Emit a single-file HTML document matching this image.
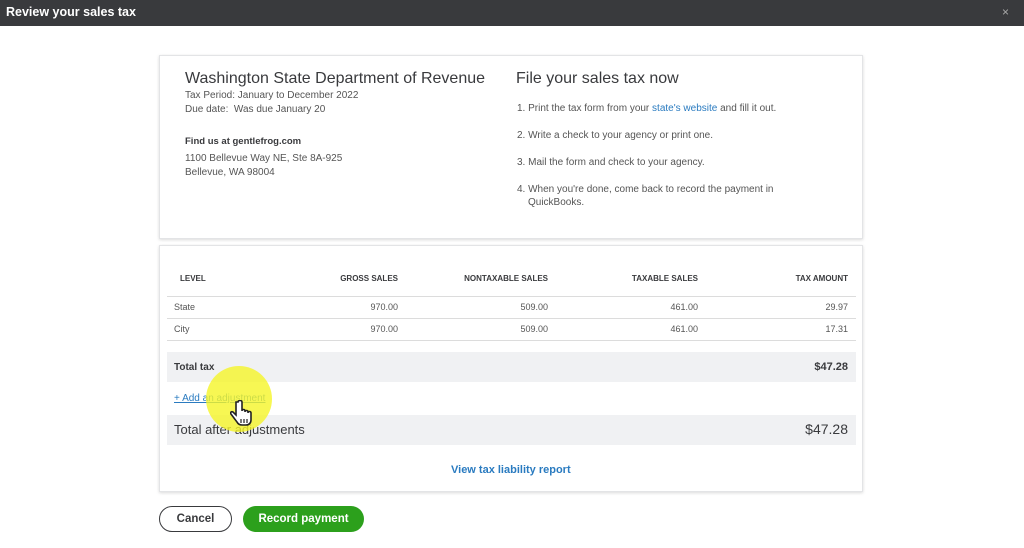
<!DOCTYPE html>
<html><head><style>
*{margin:0;padding:0;box-sizing:border-box}
body{width:1024px;height:548px;background:#fff;font-family:"Liberation Sans",sans-serif;color:#393a3d;position:relative;overflow:hidden}
.a{position:absolute;white-space:nowrap}
.hdr{position:absolute;left:0;top:0;width:1024px;height:26px;background:#393a3d}
.card{position:absolute;left:159px;width:704px;border:1px solid #e3e4e6;box-shadow:0 1px 3px rgba(0,0,0,.15);background:#fff}
.s{font-size:10px;color:#555}
.th{font-size:8px;font-weight:bold;color:#393a3d;top:274px}
.r{text-align:right}
.line{position:absolute;left:167px;width:689px;height:1px;background:#dcdcdc}
.bar{position:absolute;left:167px;width:689px;background:#f0f1f3}
.blue{color:#2a7bc0}
</style></head><body>
<div class="hdr"></div>
<div class="a" style="left:6px;top:5px;color:#fff;font-size:12.5px;font-weight:bold">Review your sales tax</div>
<div class="a" style="left:1002px;top:5px;color:#aaa;font-size:12px">×</div>

<div class="card" style="top:55px;height:184px"></div>
<div class="a" style="left:185px;top:70px;font-size:16px">Washington State Department of Revenue</div>
<div class="a s" style="left:185px;top:90px">Tax Period: January to December 2022</div>
<div class="a s" style="left:185px;top:104px">Due date:&nbsp; Was due January 20</div>
<div class="a" style="left:185px;top:136px;font-size:9.5px;font-weight:bold">Find us at gentlefrog.com</div>
<div class="a s" style="left:185px;top:153px">1100 Bellevue Way NE, Ste 8A-925</div>
<div class="a s" style="left:185px;top:167px">Bellevue, WA 98004</div>
<div class="a" style="left:516px;top:70px;font-size:16px">File your sales tax now</div>
<div class="a s" style="left:517px;top:103px">1. Print the tax form from your <span class="blue">state's website</span> and fill it out.</div>
<div class="a s" style="left:517px;top:130px">2. Write a check to your agency or print one.</div>
<div class="a s" style="left:517px;top:157px">3. Mail the form and check to your agency.</div>
<div class="a s" style="left:517px;top:184px">4. When you're done, come back to record the payment in</div>
<div class="a s" style="left:528px;top:197px">QuickBooks.</div>

<div class="card" style="top:245px;height:247px"></div>
<div class="a th" style="left:180px">LEVEL</div>
<div class="a th r" style="right:626px">GROSS SALES</div>
<div class="a th r" style="right:476px">NONTAXABLE SALES</div>
<div class="a th r" style="right:326px">TAXABLE SALES</div>
<div class="a th r" style="right:176px">TAX AMOUNT</div>
<div class="line" style="top:296px"></div>
<div class="line" style="top:318px"></div>
<div class="line" style="top:340px"></div>
<div class="a s" style="left:174px;top:302px;font-size:9px">State</div>
<div class="a s" style="right:626px;top:302px;font-size:9px">970.00</div>
<div class="a s" style="right:476px;top:302px;font-size:9px">509.00</div>
<div class="a s" style="right:326px;top:302px;font-size:9px">461.00</div>
<div class="a s" style="right:176px;top:302px;font-size:9px">29.97</div>
<div class="a s" style="left:174px;top:324px;font-size:9px">City</div>
<div class="a s" style="right:626px;top:324px;font-size:9px">970.00</div>
<div class="a s" style="right:476px;top:324px;font-size:9px">509.00</div>
<div class="a s" style="right:326px;top:324px;font-size:9px">461.00</div>
<div class="a s" style="right:176px;top:324px;font-size:9px">17.31</div>
<div class="bar" style="top:352px;height:30px"></div>
<div class="a" style="left:174px;top:362px;font-size:10px;font-weight:bold">Total tax</div>
<div class="a" style="right:176px;top:361px;font-size:11px;font-weight:bold">$47.28</div>
<div class="a blue" style="left:174px;top:393px;font-size:10px;text-decoration:underline">+ Add an adjustment</div>
<div class="bar" style="top:415px;height:30px"></div>
<div class="a" style="left:174px;top:422px;font-size:13px">Total after adjustments</div>
<div class="a" style="right:176px;top:421px;font-size:14px">$47.28</div>
<div class="a blue" style="left:451px;top:464px;font-size:11px;font-weight:bold">View tax liability report</div>
<div class="a" style="left:206px;top:366px;width:66px;height:66px;border-radius:50%;background:rgba(245,245,40,.8)"></div>
<svg class="a" style="left:230px;top:400px" width="24" height="28" viewBox="0 0 24 28"><path d="M6 2v13l-3-3c-2-1-3 1-2 2l6 8c1 2 3 3 5 3h4c3 0 5-2 5-5v-7c0-2-3-2-3 0v-1c0-2-3-2-3 0v-1c0-2-3-2-3 0V2c0-2-4-2-4 0z" fill="#fff" stroke="#222" stroke-width="1.6"/><path d="M11 19v4M14 19v4M17 19v4" stroke="#222" stroke-width="1.2"/></svg>

<div class="a" style="left:159px;top:506px;width:73px;height:26px;border:1.5px solid #393a3d;border-radius:14px;text-align:center;line-height:24px;font-size:11.5px;font-weight:bold">Cancel</div>
<div class="a" style="left:243px;top:506px;width:121px;height:26px;background:#2ca01c;border-radius:14px;text-align:center;line-height:26px;font-size:11.5px;font-weight:bold;color:#fff">Record payment</div>
</body></html>
